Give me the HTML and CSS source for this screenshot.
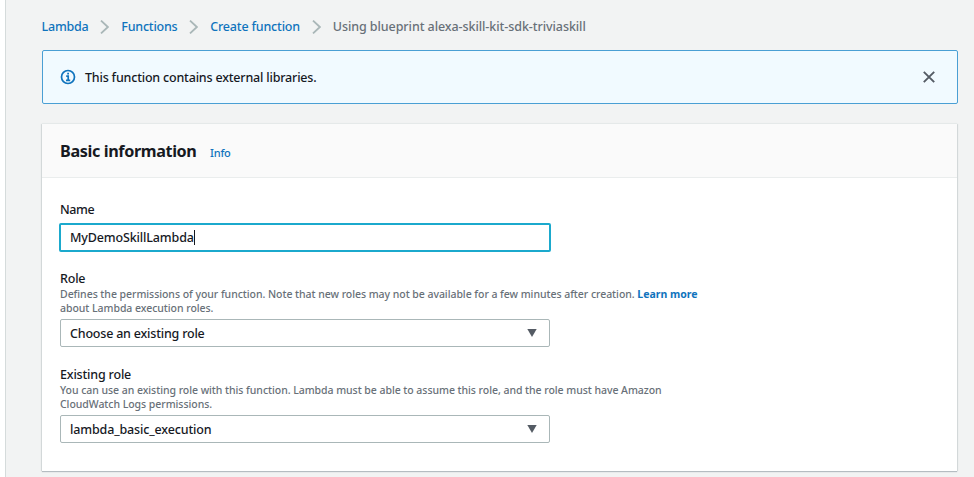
FILE: index.html
```
<!DOCTYPE html>
<html lang="en">
<head>
<meta charset="utf-8">
<title>Create function</title>
<link rel="stylesheet" href="styles.css">
</head>
<body>
<main class="page">
  <nav class="breadcrumbs">
    <a class="crumb">Lambda</a>
    <svg class="chevron" viewBox="0 0 9 14"><path d="M1 .6 7.9 7 1 13.4"/></svg>
    <a class="crumb">Functions</a>
    <svg class="chevron" viewBox="0 0 9 14"><path d="M1 .6 7.9 7 1 13.4"/></svg>
    <a class="crumb crumb-create">Create function</a>
    <svg class="chevron" viewBox="0 0 9 14"><path d="M1 .6 7.9 7 1 13.4"/></svg>
    <span class="crumb current">Using blueprint alexa-skill-kit-sdk-triviaskill</span>
  </nav>
  <section class="alert">
    <svg class="info-icon" viewBox="0 0 16 16"><circle cx="8" cy="8" r="6.5"/><path d="M6.2 7.2H8.2V11.2M6 11.3H10.2M7.2 4.7H9"/></svg>
    <span class="alert-text">This function contains external libraries.</span>
    <svg class="close" viewBox="0 0 12 12"><path d="M.8.8 11.2 11.2M11.2.8.8 11.2"/></svg>
  </section>
  <section class="card">
    <header class="card-header">
      <h2 class="title">Basic information</h2>
      <a class="info-link">Info</a>
    </header>
    <div class="card-body">
      <div class="field field-name">
        <div class="label label-name">Name</div>
        <div class="input"><span>MyDemoSkillLambda</span><i class="caret"></i></div>
      </div>
      <div class="field">
        <div class="label">Role</div>
        <div class="hint">Defines the permissions of your function. Note that new roles may not be available for a few minutes after creation. <a class="more">Learn more</a><br>about Lambda execution roles.</div>
        <div class="select select-role"><span>Choose an existing role</span><svg class="arrow" viewBox="0 0 10 8"><path d="M.3 0H9.7L5 8Z"/></svg></div>
      </div>
      <div class="field">
        <div class="label">Existing role</div>
        <div class="hint">You can use an existing role with this function. Lambda must be able to assume this role, and the role must have Amazon<br>CloudWatch Logs permissions.</div>
        <div class="select"><span>lambda_basic_execution</span><svg class="arrow" viewBox="0 0 10 8"><path d="M.3 0H9.7L5 8Z"/></svg></div>
      </div>
    </div>
  </section>
</main>
</body>
</html>
```
FILE: styles.css
```
* { box-sizing: border-box; }
body {
  margin: 0;
  height: 477px;
  overflow: hidden;
  background: #fff;
  color: #16191f;
  font: 500 12.5px/18px "Noto Sans", "Open Sans", sans-serif;
}
svg { display: block; flex: none; fill: none; }
.page {
  height: 477px;
  margin-left: 5px;
  padding: 0 17px 0 35.5px;
  border-left: 1px solid #d5dbdb;
  background: #f2f3f3;
}
.breadcrumbs { display: flex; align-items: center; height: 50px; padding-top: 4px; white-space: nowrap; }
.crumb, .info-link, .more { color: #0f73bd; }
.crumb { letter-spacing: -.22px; }
.crumb-create { letter-spacing: -.18px; }
.breadcrumbs .current { color: #687078; letter-spacing: -.07px; }
.chevron { width: 9px; height: 14px; margin: 0 11.9px; stroke: #aab7b8; stroke-width: 1.8; }
.alert {
  display: flex;
  align-items: center;
  height: 54px;
  margin-right: -.5px;
  padding: 0 21.5px 0 17.5px;
  border: 1px solid #4a9fd4;
  border-radius: 2px;
  background: #f1faff;
}
.alert-text { padding-top: 1px; letter-spacing: -.19px; }
.info-icon { width: 16px; height: 16px; margin-right: 9px; stroke: #0f73bd; stroke-width: 1.7; }
.close { width: 12px; height: 12px; margin-left: auto; stroke: #545b64; stroke-width: 1.9; }
.card {
  height: 346.5px;
  margin: 20px 0 0 .5px;
  background: #fff;
  box-shadow: 0 1px 1px #b5bcc1, 1px 0 1px #d9dede, -1px 0 1px #d9dede, 0 -1px 1px #eaeded;
}
.card-header {
  display: flex;
  align-items: baseline;
  height: 54px;
  padding: 15px 18px 0;
  border-bottom: 1px solid #eaeded;
  background: #fafafa;
}
.title { margin: 0 13.6px 0 0; font-size: 16.2px; line-height: 24px; font-weight: 700; letter-spacing: -.38px; }
.info-link { font-size: 11px; letter-spacing: -.25px; }
.card-body { padding: 23px 18px 0; }
.field { margin-bottom: 19.2px; }
.field-name { margin-bottom: 18px; }
.label { height: 18px; letter-spacing: -.18px; }
.label-name { letter-spacing: -.4px; }
.hint { color: #687078; font-size: 10.5px; line-height: 13.6px; margin-bottom: 4px; white-space: nowrap; letter-spacing: -.045px; }
.more { font-weight: 700; letter-spacing: 0; }
.input, .select {
  display: flex;
  align-items: center;
  width: 490px;
  height: 27.6px;
  padding: 0 12px 0 9px;
  border: 1px solid #aab7b8;
  border-radius: 2px;
  letter-spacing: -.14px;
}
.select span { padding-top: 1.4px; }
.select-role { letter-spacing: -.2px; }
.input { width: 492px; height: 29px; margin: 4px 0 0 -1px; border: 2px solid #1ba9cd; }
.input span { padding-top: 1px; }
.caret { width: 1px; height: 15px; background: #16191f; }
.arrow { width: 10px; height: 8px; margin-left: auto; fill: #545b64; }
```
